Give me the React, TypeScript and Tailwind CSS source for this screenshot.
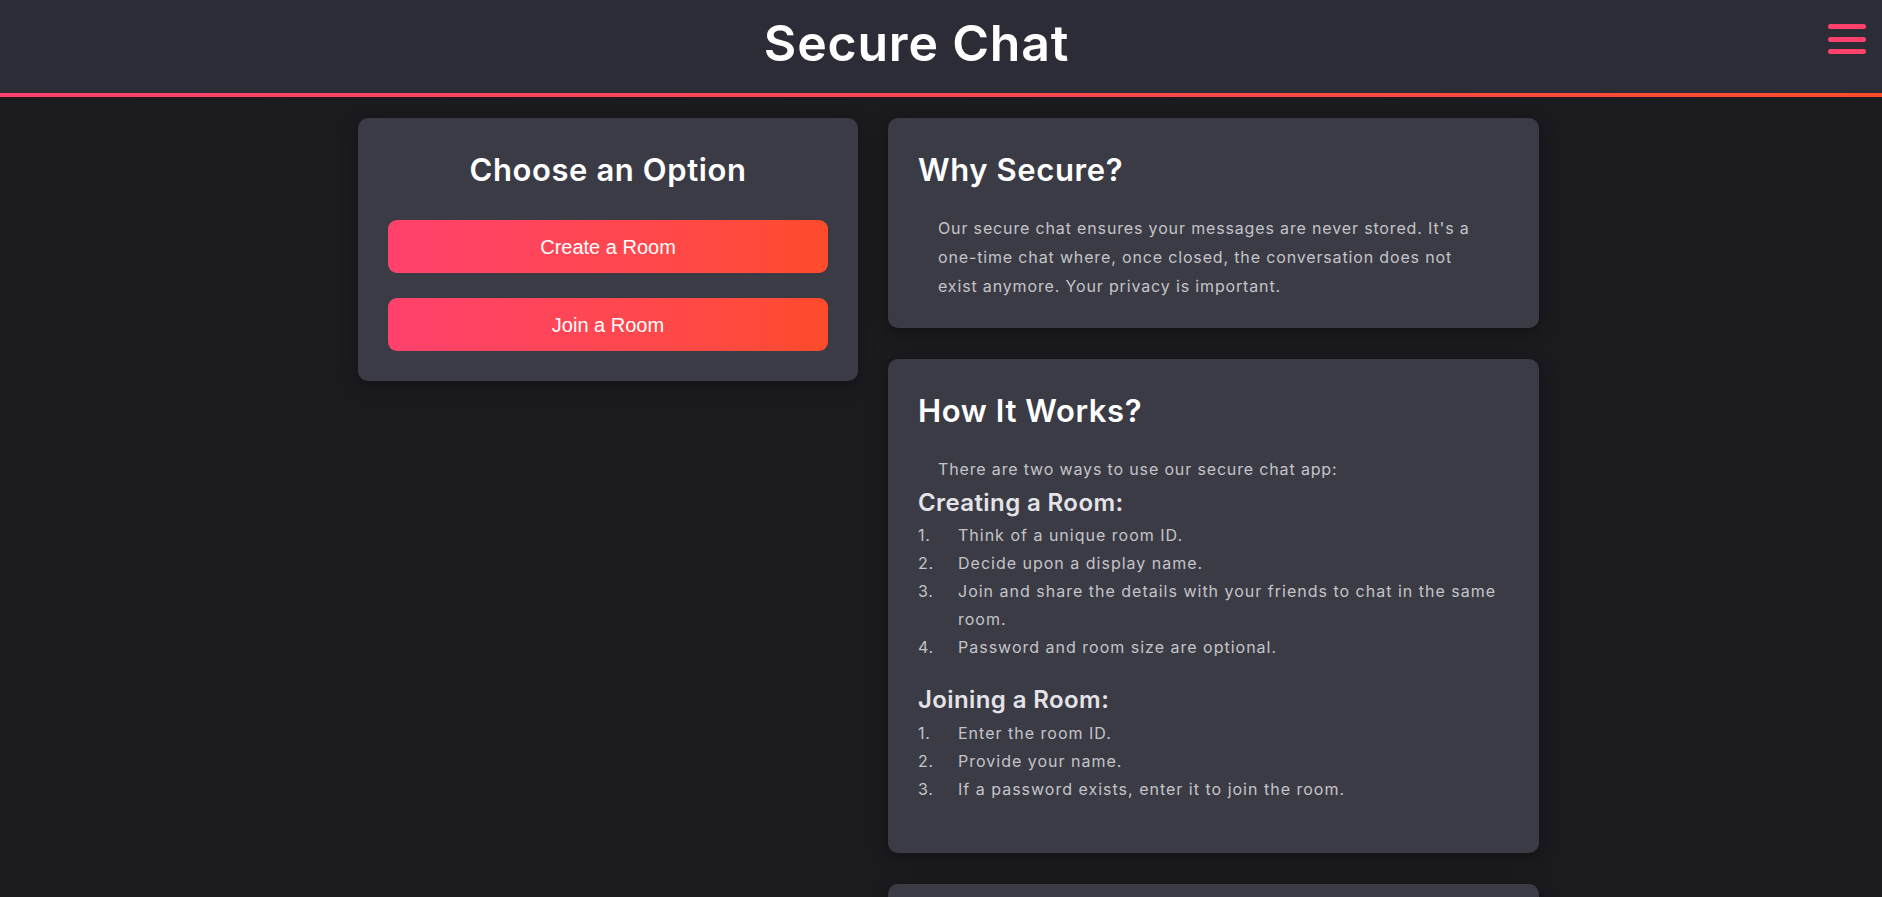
import React from "react";

const font = { fontFamily: "Inter, 'Noto Sans', sans-serif" };

function Hamburger() {
  return (
    <button className="mt-[24px] mr-4 flex w-[38px] flex-col gap-[7.5px]" aria-label="menu">
      <span className="block h-[5px] w-full rounded-full bg-[#ff416c]" />
      <span className="block h-[5px] w-full rounded-full bg-[#ff416c]" />
      <span className="block h-[5px] w-full rounded-full bg-[#ff416c]" />
    </button>
  );
}

function Card({ children }: { children: React.ReactNode }) {
  return (
    <div className="rounded-[10px] bg-[#3b3b46] px-[30px] pt-[30px] pb-[28px] shadow-[0_4px_16px_rgba(0,0,0,0.35)]">
      {children}
    </div>
  );
}

function Title({ children, center }: { children: React.ReactNode; center?: boolean }) {
  return (
    <h2
      className={
        center
          ? "text-center text-[31px] leading-[44px] font-semibold tracking-[0.6px] text-white"
          : "text-[31px] leading-[44px] font-semibold tracking-[0.6px] text-white"
      }
    >
      {children}
    </h2>
  );
}

function Steps({ items }: { items: string[] }) {
  return (
    <ol className="text-[16px] leading-[28px] tracking-[1px] text-[#c4c4c8]">
      {items.map((item, i) => (
        <li key={item} className="flex">
          <span className="w-[40px] shrink-0 tracking-[0.65px]">{i + 1}.</span>
          <span>{item}</span>
        </li>
      ))}
    </ol>
  );
}

export default function App() {
  return (
    <div className="min-h-screen bg-[#1b1b1f]" style={font}>
      <header className="bg-[#2c2c36]">
        <div className="flex h-[93px] items-start pl-[5px]">
          <h1 className="flex-1 pt-[13px] text-center text-[50px] leading-[60px] font-semibold tracking-[0.8px] text-white">
            Secure Chat
          </h1>
          <Hamburger />
        </div>
        <div className="h-[4px] bg-gradient-to-r from-[#ff416c] to-[#ff4b2b]" />
      </header>

      <main className="flex justify-center gap-[30px] pt-[21px] pb-10 pl-[15px]">
        <div className="w-[500px] shrink-0 self-start">
          <div className="rounded-[10px] bg-[#3b3b46] p-[30px] shadow-[0_4px_16px_rgba(0,0,0,0.35)]">
            <Title center>Choose an Option</Title>
            <div className="mt-[28px] flex flex-col gap-[25px]">
              <button
                className="h-[53px] rounded-[9px] bg-gradient-to-r from-[#ff416c] to-[#ff4b2b] text-[20px] text-white"
                style={{ fontFamily: "'Liberation Sans', Arial, sans-serif" }}
              >
                Create a Room
              </button>
              <button
                className="h-[53px] rounded-[9px] bg-gradient-to-r from-[#ff416c] to-[#ff4b2b] text-[20px] text-white"
                style={{ fontFamily: "'Liberation Sans', Arial, sans-serif" }}
              >
                Join a Room
              </button>
            </div>
          </div>
        </div>

        <div className="flex w-[651px] shrink-0 flex-col gap-[31px]">
          <Card>
            <Title>Why Secure?</Title>
            <p className="mt-[22px] pr-[31px] pl-5 text-[16px] leading-[28.8px] tracking-[0.85px] text-[#c4c4c8]">
              Our secure chat ensures your messages are never stored. It's a one-time chat where,
              once closed, the conversation does not exist anymore. Your privacy is important.
            </p>
          </Card>

          <Card>
            <Title>How It Works?</Title>
            <p className="mt-[22px] pl-5 text-[16px] leading-[29px] tracking-[0.85px] text-[#c4c4c8]">
              There are two ways to use our secure chat app:
            </p>
            <h3 className="mt-[5px] text-[24px] leading-[28px] font-semibold tracking-[0.4px] text-[#e4e4e8]">
              Creating a Room:
            </h3>
            <div className="mt-[4px]">
              <Steps
                items={[
                  "Think of a unique room ID.",
                  "Decide upon a display name.",
                  "Join and share the details with your friends to chat in the same room.",
                  "Password and room size are optional.",
                ]}
              />
            </div>
            <h3 className="mt-[25px] text-[24px] leading-[28px] font-semibold tracking-[0.4px] text-[#e4e4e8]">
              Joining a Room:
            </h3>
            <div className="mt-[5px] mb-[22px]">
              <Steps
                items={[
                  "Enter the room ID.",
                  "Provide your name.",
                  "If a password exists, enter it to join the room.",
                ]}
              />
            </div>
          </Card>

          <Card>
            <Title>Need Help?</Title>
            <p className="mt-[22px] pl-5 text-[16px] leading-[29px] tracking-[0.85px] text-[#c4c4c8]">
              If you have any questions, feel free to reach out.
            </p>
          </Card>
        </div>
      </main>
    </div>
  );
}
